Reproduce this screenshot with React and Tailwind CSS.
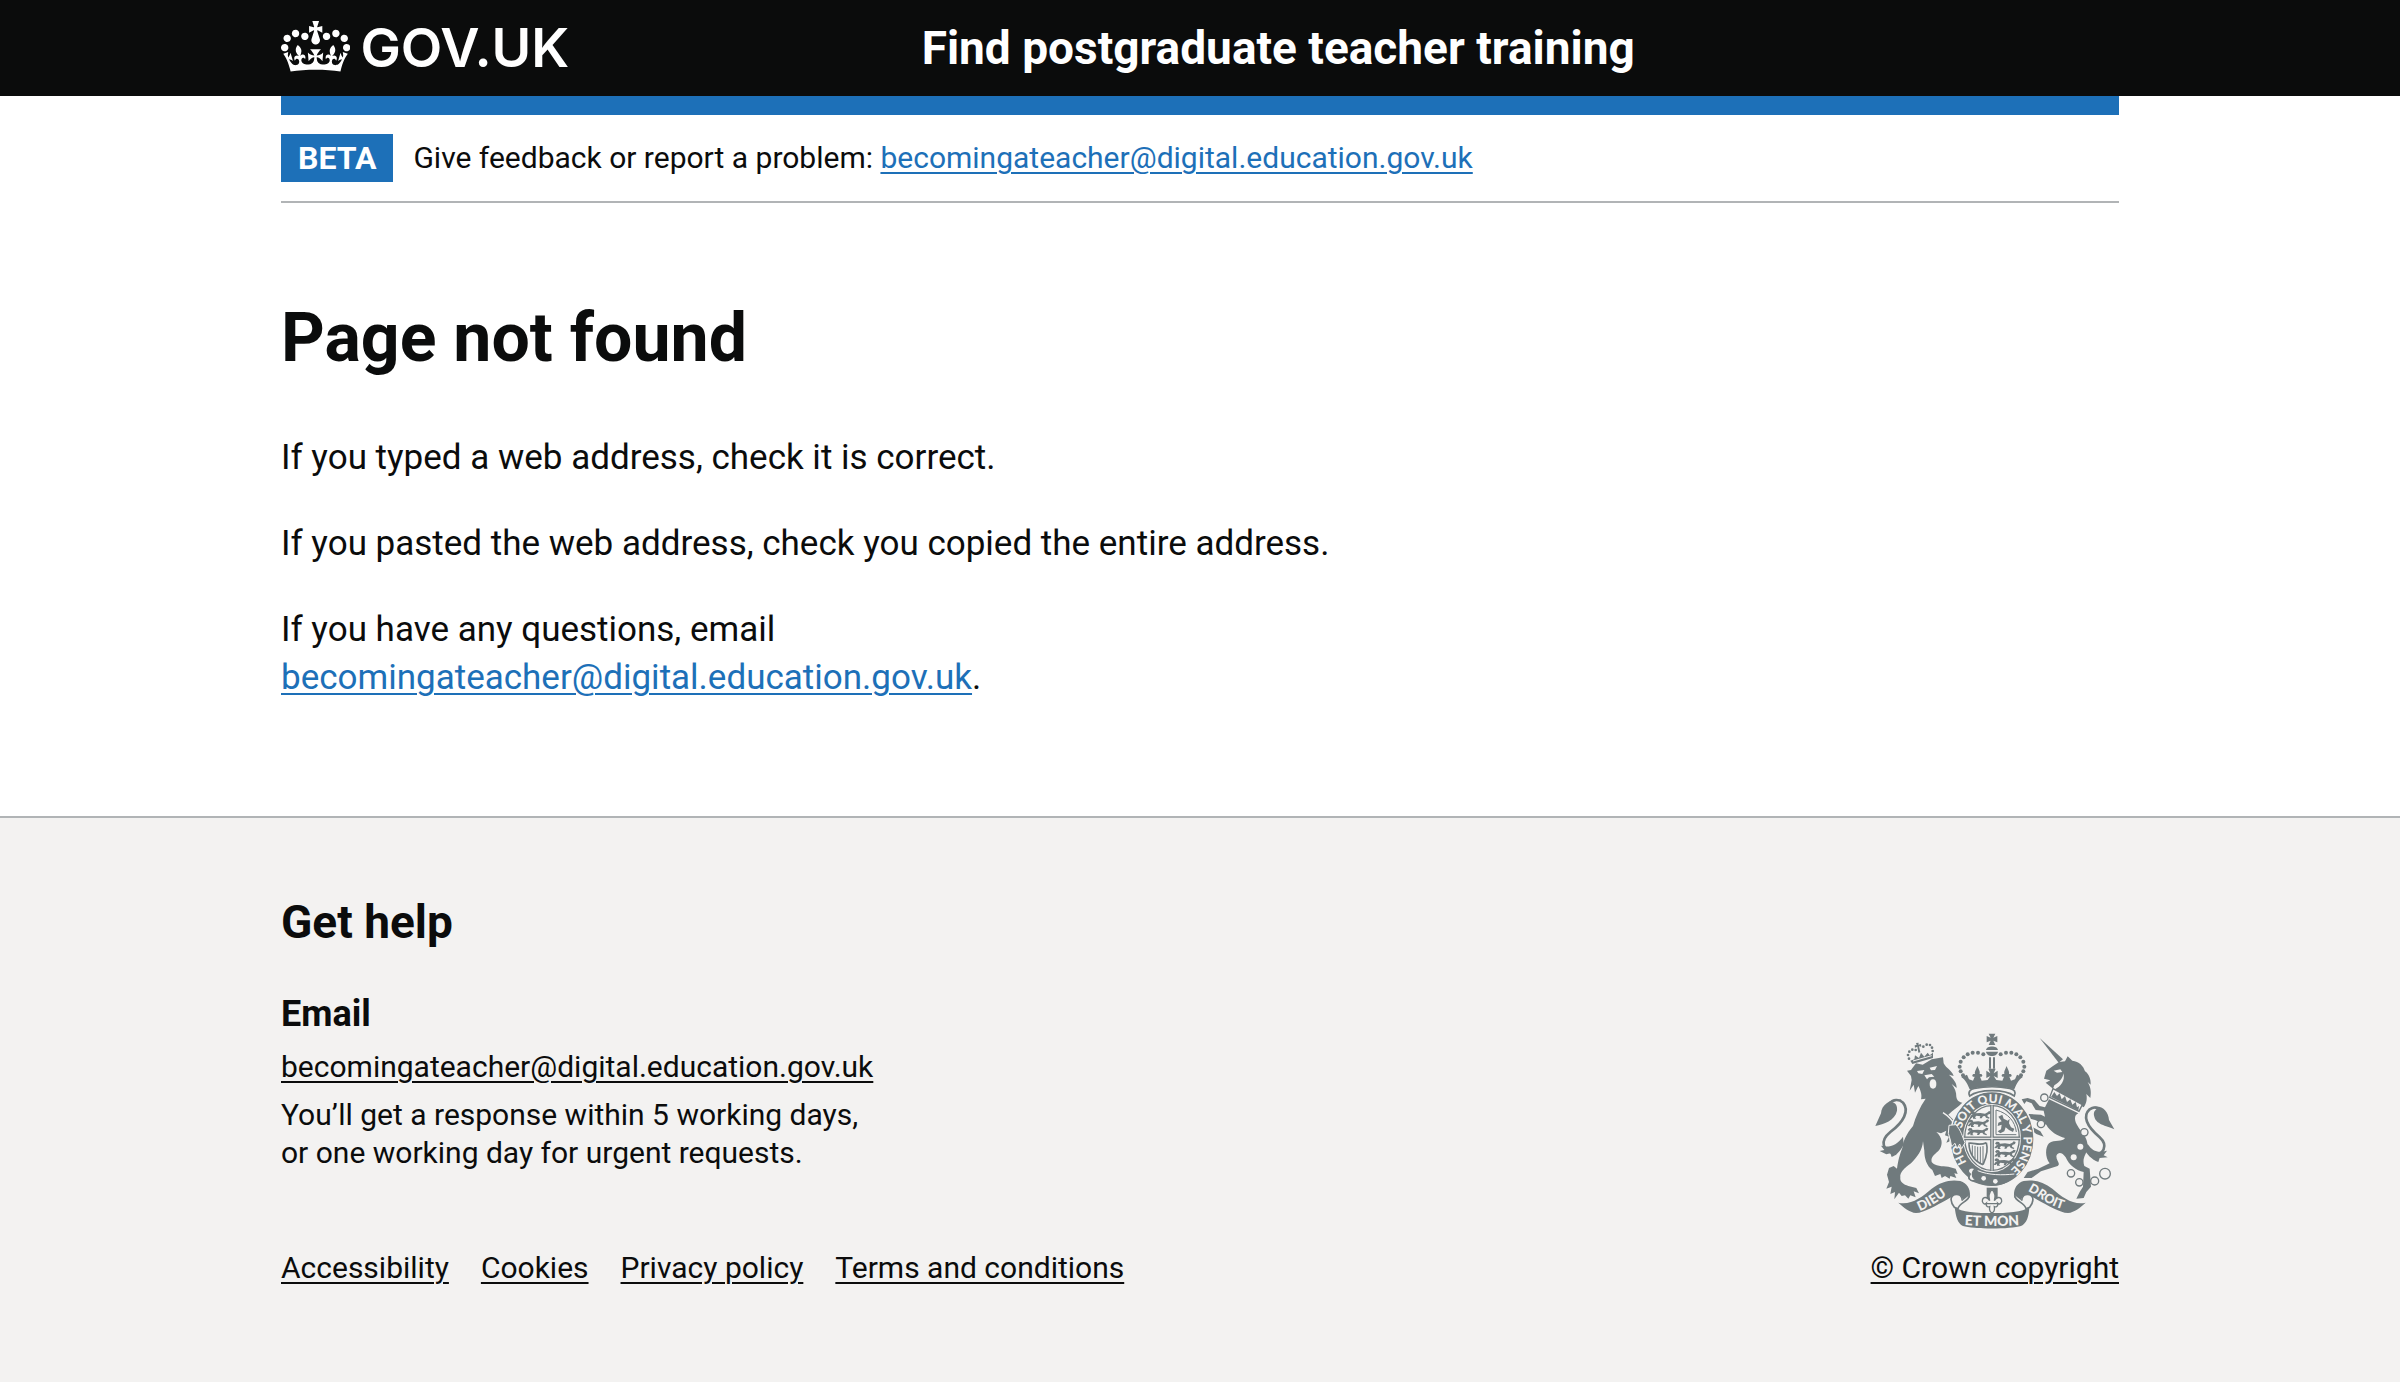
import React from "react";

const EMAIL = "becomingateacher@digital.education.gov.uk";
const INK = "#707a7d";
const PAPER = "#f3f2f1";

function Crown() {
  return (
    <svg viewBox="0 0 132 97" className="mb-1 h-[51px] w-auto" fill="#fff" aria-hidden="true">
      <path
        fillRule="evenodd"
        d="M25 30.2c3.5 1.5 7.7-.2 9.1-3.7 1.5-3.6-.2-7.8-3.9-9.2-3.6-1.4-7.6.3-9.1 3.9-1.4 3.5.3 7.5 3.9 9zM9 39.5c3.6 1.5 7.8-.2 9.2-3.7 1.5-3.6-.2-7.8-3.9-9.1-3.6-1.5-7.6.2-9.1 3.8-1.4 3.5.3 7.5 3.8 9zM4.4 57.2c3.5 1.5 7.7-.2 9.1-3.8 1.5-3.6-.2-7.7-3.9-9.1-3.5-1.5-7.6.3-9.1 3.8-1.4 3.5.3 7.6 3.9 9.1zm38.3-21.4c3.5 1.5 7.7-.2 9.1-3.8 1.5-3.6-.2-7.7-3.9-9.1-3.6-1.5-7.6.3-9.1 3.8-1.3 3.6.4 7.7 3.9 9.1zm64.4-5.6c-3.6 1.5-7.8-.2-9.1-3.7-1.5-3.6.2-7.8 3.8-9.2 3.6-1.4 7.7.3 9.2 3.9 1.3 3.5-.4 7.5-3.9 9zm15.9 9.3c-3.6 1.5-7.7-.2-9.1-3.7-1.5-3.6.2-7.8 3.7-9.1 3.6-1.5 7.7.2 9.2 3.8 1.5 3.5-.3 7.5-3.8 9zm4.7 17.7c-3.6 1.5-7.8-.2-9.2-3.8-1.5-3.6.2-7.7 3.9-9.1 3.6-1.5 7.7.3 9.2 3.8 1.3 3.5-.4 7.6-3.9 9.1zM89.3 35.8c-3.6 1.5-7.8-.2-9.2-3.8-1.4-3.6.2-7.7 3.9-9.1 3.6-1.5 7.7.3 9.2 3.8 1.4 3.6-.3 7.7-3.9 9.1zM69.7 17.7l8.9 4.7V9.3l-8.9 2.8c-.2-.3-.5-.6-.9-.9L72.4 0H59.6l3.5 11.2c-.3.3-.6.5-.9.9l-8.8-2.8v13.1l8.8-4.7c.3.3.6.7.9.9l-5 15.4v.1c-.2.8-.4 1.6-.4 2.4 0 4.1 3.1 7.5 7 8.1h.2c.3 0 .7.1 1 .1.4 0 .7 0 1-.1h.2c4-.6 7.1-4.1 7.1-8.1 0-.8-.1-1.7-.4-2.4V34l-5.1-15.4c.4-.2.7-.6 1-.9zM66 92.8c16.9 0 32.8 1.1 47.1 3.2 4-16.9 8.9-26.7 14-33.5l-9.6-3.4c1 4.9 1.1 7.2 0 10.2-1.5-1.4-3-4.3-4.2-8.7L108.6 76c2.8-2 5-3.2 7.5-3.3-4.4 9.4-10 11.9-13.6 11.2-4.3-.8-6.3-4.6-5.6-7.9 1-4.7 5.7-5.9 8-.5 4.3-8.7-3-11.4-7.6-8.8 7.1-7.2 7.9-13.5 2.1-21.1-8 6.1-8.1 12.3-4.5 20.8-4.7-5.4-12.1-2.5-9.5 6.2 3.4-5.2 7.9-2 7.2 3.1-.6 4.3-6.4 7.8-13.5 7.2-10.3-.9-10.9-8-11.2-13.8 2.5-.5 7.1 1.8 11 7.3L80.2 60c-4.1 4.4-8 5.3-12.3 5.4 1.4-4.4 8-11.6 8-11.6H55.5s6.4 7.2 7.9 11.6c-4.2-.1-8-1-12.3-5.4l1.4 16.4c3.9-5.5 8.5-7.7 10.9-7.3-.3 5.8-.9 12.8-11.1 13.8-7.2.6-12.9-2.9-13.5-7.2-.7-5 3.8-8.3 7.1-3.1 2.7-8.7-4.6-11.6-9.4-6.2 3.7-8.5 3.6-14.7-4.6-20.8-5.8 7.6-5 13.9 2.2 21.1-4.7-2.6-11.9.1-7.7 8.8 2.3-5.5 7.1-4.2 8.1.5.7 3.3-1.3 7.1-5.7 7.9-3.5.7-9-1.8-13.5-11.2 2.5.1 4.7 1.3 7.5 3.3l-4.7-15.4c-1.2 4.4-2.7 7.2-4.3 8.7-1.1-3-.9-5.3 0-10.2l-9.5 3.4c5 6.9 9.9 16.7 14 33.5 14.8-2.1 30.8-3.2 47.7-3.2z"
      />
    </svg>
  );
}

const CROWN_PEARLS = [
  [367, 103], [351, 98], [335, 98], [320, 103], [308, 112], [299, 125], [296, 140], [299, 154], [306, 166],
];

const CHAIN = [
  [550, 233, 11], [540, 312, 11], [670, 337, 11], [630, 460, 11], [655, 487, 11], [701, 483, 12], [732, 461, 16],
];

function WalkingLion({ x, y }) {
  return (
    <path
      transform={`translate(${x} ${y})`}
      fill={INK}
      d="M0 6 L5 1 L12 2 L15 7 L30 6 L44 8 L52 4 L56 0 L62 2 L60 8 L52 11 L51 16 L58 20 L56 23 L47 20 L44 15 L38 16 L34 22 L28 22 L30 16 L18 14 L14 19 L18 23 L8 23 L8 17 L4 21 L-2 20 L3 13 L10 8 L4 10 Z"
    />
  );
}

function HalfRibbon() {
  return (
    <g>
      <path
        fill={INK}
        d="M112 548 C150 556 182 532 212 506 C238 486 268 477 298 483 C318 489 328 506 327 526 C326 536 320 542 310 546 L300 528 C288 520 272 530 256 540 C228 554 190 579 165 579 C145 577 128 562 112 548 Z"
      />
      <path
        fill={PAPER}
        stroke={INK}
        strokeWidth="5"
        d="M325 526 C323 546 296 546 291 566 L280 562 C268 546 266 530 280 524 C294 520 304 528 304 542"
      />
    </g>
  );
}

function Crest() {
  return (
    <svg viewBox="36 36 729 594" className="h-[198px] w-auto" aria-hidden="true">
      <defs>
        <path id="garter" d="M317 427 A95 111 0 1 1 452 446" />
        <path id="dieu" d="M176 573 C210 560 240 538 276 512" />
        <path id="droit" d="M500 513 C532 524 566 566 630 572" />
        <path id="etmon" d="M300 614 Q393 622 486 614" />
      </defs>

      {/* lion */}
      <path fill="none" stroke={INK} strokeWidth="8" d="M106 402 C62 394 56 362 88 336 C128 306 146 272 126 248 C114 236 96 238 86 250" />
      <path fill={INK} d="M122 239 C90 236 62 252 60 280 L43 318 C68 312 102 302 108 272 C110 258 104 248 92 246 Z" />
      <path fill={INK} d="M126 350 C108 376 84 384 60 377 L70 390 L56 393 L76 403 L88 400 L92 411 C110 404 122 388 128 372 Z" />
      <path
        fill={INK}
        d="M138 152 L150 150 L165 130 L185 134 L212 118 L246 112 L248 130 C256 146 272 150 278 168 L264 164 C276 176 288 188 287 204 L272 192 C282 206 286 216 286 230 C288 242 294 246 304 248 C290 262 276 270 262 284 L284 306 C296 326 302 346 312 366 L302 384 L296 372 L288 384 L282 370 L272 378 L270 362 L256 368 L264 350 L252 346 L256 332 L240 340 L226 336 C244 352 246 372 236 388 C226 402 208 408 212 426 C222 440 244 438 262 440 L284 446 L290 462 L280 460 L286 474 L268 468 L266 476 L252 468 L242 474 L238 462 L222 468 L214 450 C196 436 190 414 190 392 L186 364 C184 392 168 412 150 430 C130 444 116 458 118 472 C116 486 128 494 142 498 L166 504 L174 520 L158 514 L164 532 L148 526 L142 536 L132 526 L122 528 L114 518 L100 538 L102 516 L88 522 L92 500 L76 506 L84 486 L78 464 L84 444 L98 438 L108 446 C112 420 116 404 124 384 C126 364 136 342 156 318 C164 290 176 262 194 236 L180 238 C184 224 178 210 172 198 L162 218 L158 194 L146 212 L152 180 L150 168 Z"
      />
      <path fill={PAPER} d="M168 153 L190 150 L184 162 L172 160 Z M206 143 L228 138 L222 150 L210 151 Z M190 166 L212 162 L220 170 L204 172 L198 178 Z" />
      <ellipse cx="216" cy="192" rx="10" ry="14" fill={PAPER} />
      <path fill="none" stroke={PAPER} strokeWidth="4" d="M246 278 C262 288 276 302 284 320" />
      <path fill={INK} d="M148 122 L154 132 L216 114 L216 98 L206 106 L200 98 L190 110 L180 98 L174 114 L162 106 L160 118 Z" />
      <path fill="none" stroke={PAPER} strokeWidth="3" d="M156 123 L212 107" />
      <g fill={INK}>
        {[[144, 116], [141, 105], [145, 95], [154, 89], [164, 90], [187, 80], [197, 74], [207, 75], [213, 83], [215, 93]].map(([x, y]) => (
          <circle key={`${x}-${y}`} cx={x} cy={y} r="4" />
        ))}
        <path d="M165 69 L173 68 L172 74 L180 72 L181 80 L174 79 L178 97 L172 98 L169 80 L162 83 L161 76 L167 75 Z" />
      </g>

      {/* unicorn */}
      <path fill="none" stroke={INK} strokeWidth="8" d="M690 408 C730 406 742 376 716 352 C676 318 664 288 686 268 C698 260 710 262 716 270" />
      <path fill={INK} d="M690 262 C722 252 742 272 744 300 L760 328 C744 318 706 316 700 290 C696 276 702 270 708 266 Z" />
      <path fill={INK} d="M680 372 C694 394 712 400 738 392 L728 406 L740 412 L716 414 L712 426 C692 418 676 402 670 386 Z" />
      <path fill={INK} d="M536 54 L606 118 L593 128 Z" />
      <path
        fill={INK}
        d="M556 152 L576 138 L594 126 L612 124 L620 109 L634 122 C654 124 668 138 672 154 C684 162 690 178 689 194 L680 186 C690 202 691 218 688 234 L676 222 C680 240 674 254 668 262 L576 206 L566 198 L554 188 L568 181 L549 176 Z"
      />
      <path fill={PAPER} d="M578 152 L598 148 L604 156 L588 158 Z M580 196 C596 186 606 174 607 160 C614 182 598 200 582 208 L576 206 Z" />
      <path fill={PAPER} stroke={INK} strokeWidth="4" d="M576 206 L664 254 L654 274 L566 232 Z" />
      <path fill={INK} d="M570 231 L580 216 L588 228 L596 220 L602 238 L612 228 L618 246 L628 238 L634 254 L644 246 L648 262 L654 258 L652 272 Z" />
      <path
        fill={INK}
        d="M564 238 L652 280 C638 286 640 302 650 318 C660 336 682 352 680 384 C676 404 662 414 670 438 L686 446 L690 500 L676 516 L668 534 L646 536 L656 516 L666 500 L668 456 C646 452 624 436 614 412 C604 398 592 394 586 408 C586 424 600 430 590 438 L540 454 L512 474 L488 474 L500 456 L532 446 L566 430 C552 412 552 384 564 370 C580 358 606 366 612 354 C590 348 566 334 556 314 L522 300 L508 296 L512 320 L538 334 L548 350 L526 342 L504 326 L494 292 L504 282 L540 284 L552 290 L548 272 L524 270 L512 250 L496 244 L490 252 L482 238 L500 234 L520 240 L536 258 L552 262 Z"
      />
      <circle cx="658" cy="380" r="9" fill={PAPER} />
      <circle cx="638" cy="412" r="9" fill={PAPER} />
      {CHAIN.map(([x, y, r]) => (
        <circle key={`${x}-${y}`} cx={x} cy={y} r={r} fill={PAPER} stroke={INK} strokeWidth="4" />
      ))}

      {/* garter and shield */}
      <ellipse cx="393" cy="357" rx="126" ry="142" fill={INK} stroke={PAPER} strokeWidth="4" />
      <text fill={PAPER} className="font-['Lato',sans-serif] text-[36px] font-black">
        <textPath href="#garter">HONI SOIT QUI MAL Y PENSE</textPath>
      </text>
      <ellipse cx="393" cy="354" rx="87" ry="102" fill={PAPER} />
      <ellipse cx="393" cy="354" rx="82" ry="97" fill="none" stroke={INK} strokeWidth="4" />
      <path stroke={INK} strokeWidth="11" d="M393 256 V452 M308 355 H478" />
      <path stroke={PAPER} strokeWidth="3" d="M393 256 V452 M308 355 H478" />
      <WalkingLion x={328} y={273} />
      <WalkingLion x={322} y={298} />
      <WalkingLion x={320} y={323} />
      <WalkingLion x={402} y={364} />
      <WalkingLion x={402} y={389} />
      <WalkingLion x={400} y={414} />
      <path fill="none" stroke={INK} strokeWidth="3" d="M405 344 V270 M405 344 H466 M466 336 C462 304 442 280 405 270" />
      <path fill={INK} d="M412 290 L424 284 L428 296 L440 302 L446 296 L444 310 L450 322 L460 326 L456 336 L444 330 L434 322 L430 334 L418 340 L410 334 L420 328 L422 314 L410 318 L412 308 L422 304 Z" />
      <path fill="none" stroke={INK} strokeWidth="5" d="M322 370 C340 366 352 380 376 368 M324 370 C324 400 340 424 366 434 M376 368 C384 396 372 420 366 434" />
      <path stroke={INK} strokeWidth="3" d="M334 376 V406 M342 378 V416 M350 380 V424 M358 380 V430 M366 378 V432" />
      <path fill={INK} d="M318 454 C350 462 372 462 392 460 C430 464 452 462 466 458 C452 484 422 498 392 498 C366 498 342 490 322 478 Z" />
      <path fill="none" stroke={PAPER} strokeWidth="3" d="M350 452 C384 466 424 466 460 462" />
      <path fill={PAPER} stroke={INK} strokeWidth="4" d="M344 446 C324 438 316 452 328 462 C318 476 332 488 344 478 C332 474 330 454 344 446 Z" />
      <circle cx="368" cy="475" r="7" fill={PAPER} />
      <circle cx="403" cy="484" r="7" fill={PAPER} />
      <path fill={INK} stroke={PAPER} strokeWidth="3" d="M262 340 L264 316 L284 314 C300 330 304 350 312 368 L302 386 L296 372 L288 386 L282 370 L272 380 L268 360 Z" />

      {/* crown */}
      <g fill={INK}>
        {CROWN_PEARLS.map(([x, y]) => (
          <g key={`${x}-${y}`}>
            <circle cx={x} cy={y} r="6" />
            <circle cx={786 - x} cy={y} r="6" />
          </g>
        ))}
        <path d="M383 41 H403 L397 53 L409 48 V67 L397 62 L403 75 H383 L389 62 L377 67 V48 L389 53 Z" />
        <path d="M375 90 C377 76 409 76 411 90 Z M375 95 H411 C409 112 377 112 375 95 Z" />
        <path d="M384 112 H390 V146 H384 Z M396 112 H402 V146 H396 Z" />
        <path d="M301 172 L318 164 L324 178 L336 182 L341 170 C332 172 331 160 342 162 C340 154 346 148 349 138 C353 148 358 154 356 162 C367 160 366 172 357 170 L362 182 L380 180 L388 168 L376 174 V152 L388 160 L382 146 H404 L398 160 L410 152 V174 L398 168 L406 180 L424 182 L429 170 C420 172 419 160 430 162 C428 154 433 148 437 138 C440 148 446 154 444 162 C455 160 454 172 445 170 L450 182 L462 178 L468 164 L485 172 C472 180 466 194 460 208 C420 198 366 198 326 208 C320 194 314 180 301 172 Z" />
      </g>
      <path fill={PAPER} stroke={INK} strokeWidth="5" d="M326 228 C320 216 328 207 340 205 C374 199 412 199 446 205 C460 208 466 216 460 228 C444 216 420 212 393 212 C366 212 342 216 326 228 Z" />

      {/* pendant */}
      <path fill={INK} d="M377 503 H410 V550 H377 Z" />
      <path
        fill={PAPER}
        stroke={INK}
        strokeWidth="4"
        d="M393 508 C404 520 404 530 400 542 C408 528 422 530 422 544 C420 552 414 554 410 550 C412 560 404 562 400 560 C402 570 398 578 393 578 C388 578 384 570 386 560 C382 562 374 560 376 550 C372 554 366 552 364 544 C364 530 378 528 386 542 C382 530 382 520 393 508 Z M374 551 H412"
      />

      {/* motto ribbon */}
      <HalfRibbon />
      <g transform="translate(786 0) scale(-1 1)">
        <HalfRibbon />
      </g>
      <path fill={INK} d="M281 560 C300 577 350 579 393 579 C436 579 486 577 505 560 C504 590 497 610 480 618 C450 628 336 628 306 618 C290 610 284 590 281 560 Z" />
      <g fill={PAPER} className="font-['Lato',sans-serif] font-black">
        <text className="text-[40px]"><textPath href="#dieu">DIEU</textPath></text>
        <text className="text-[38px]"><textPath href="#droit">DROIT</textPath></text>
        <text className="text-[42px]" textAnchor="middle"><textPath href="#etmon" startOffset="50%">ET MON</textPath></text>
      </g>
    </svg>
  );
}

function Container({ className = "", children }) {
  return (
    <div className="px-8">
      <div className={`mx-auto max-w-[1838px] ${className}`}>{children}</div>
    </div>
  );
}

const linkBase = "underline decoration-2 underline-offset-4";
const blueLink = "text-[#1d70b8] underline decoration-2 underline-offset-4";
const FOOTER_LINKS = ["Accessibility", "Cookies", "Privacy policy", "Terms and conditions"];

export default function App() {
  return (
    <div className="flex min-h-screen flex-col bg-white font-['Roboto',sans-serif] text-[#0b0c0c]">
      <header className="bg-[#0b0c0c] text-white">
        <Container className="flex min-h-24 items-center">
          <div className="mr-7 w-1/3 shrink-0">
            <a href="#" className="inline-flex items-center gap-[10px] align-top">
              <Crown />
              <span className="font-['Inter',sans-serif] text-[54px] leading-[64px] font-semibold">GOV.UK</span>
            </a>
          </div>
          <a href="#" className="text-[46px] leading-[54px] font-bold">
            Find postgraduate teacher training
          </a>
        </Container>
      </header>

      <Container>
        <div className="h-[19px] bg-[#1d70b8]" />
        <div className="flex items-center gap-5 border-b-2 border-[#b1b4b6] py-[19px] text-[30px] leading-[38px]">
          <strong className="bg-[#1d70b8] px-[17px] py-[5px] text-[32px] font-bold text-white">BETA</strong>
          <span>
            Give feedback or report a problem:{" "}
            <a href={`mailto:${EMAIL}`} className={blueLink}>{EMAIL}</a>
          </span>
        </div>
      </Container>

      <main className="flex-1">
        <Container className="pt-[95px] pb-[114px] text-[35px] leading-[48px]">
          <h1 className="mb-[56px] text-[68px] leading-[80px] font-bold">Page not found</h1>
          <div className="flex flex-col gap-[38px]">
            <p>If you typed a web address, check it is correct.</p>
            <p>If you pasted the web address, check you copied the entire address.</p>
            <p>
              If you have any questions, email
              <br />
              <a href={`mailto:${EMAIL}`} className={blueLink}>{EMAIL}</a>.
            </p>
          </div>
        </Container>
      </main>

      <footer className="border-t-2 border-[#b1b4b6] bg-[#f3f2f1]">
        <Container className="flex items-end justify-between pt-[77px] pb-[95px] text-[30px] leading-[38px]">
          <div>
            <h2 className="mb-[41px] text-[46px] leading-[54px] font-bold">Get help</h2>
            <h3 className="mb-[10px] text-[36px] leading-[48px] font-bold">Email</h3>
            <ul className="mb-[77px] flex flex-col gap-[10px]">
              <li>
                <a href={`mailto:${EMAIL}`} className={linkBase}>{EMAIL}</a>
              </li>
              <li>
                You’ll get a response within 5 working days,
                <br />
                or one working day for urgent requests.
              </li>
            </ul>
            <ul className="flex gap-8">
              {FOOTER_LINKS.map((label) => (
                <li key={label}>
                  <a href="#" className={linkBase}>{label}</a>
                </li>
              ))}
            </ul>
          </div>
          <a href="#" className="flex flex-col items-center gap-[19px]">
            <Crest />
            <span className={linkBase}>© Crown copyright</span>
          </a>
        </Container>
      </footer>
    </div>
  );
}
